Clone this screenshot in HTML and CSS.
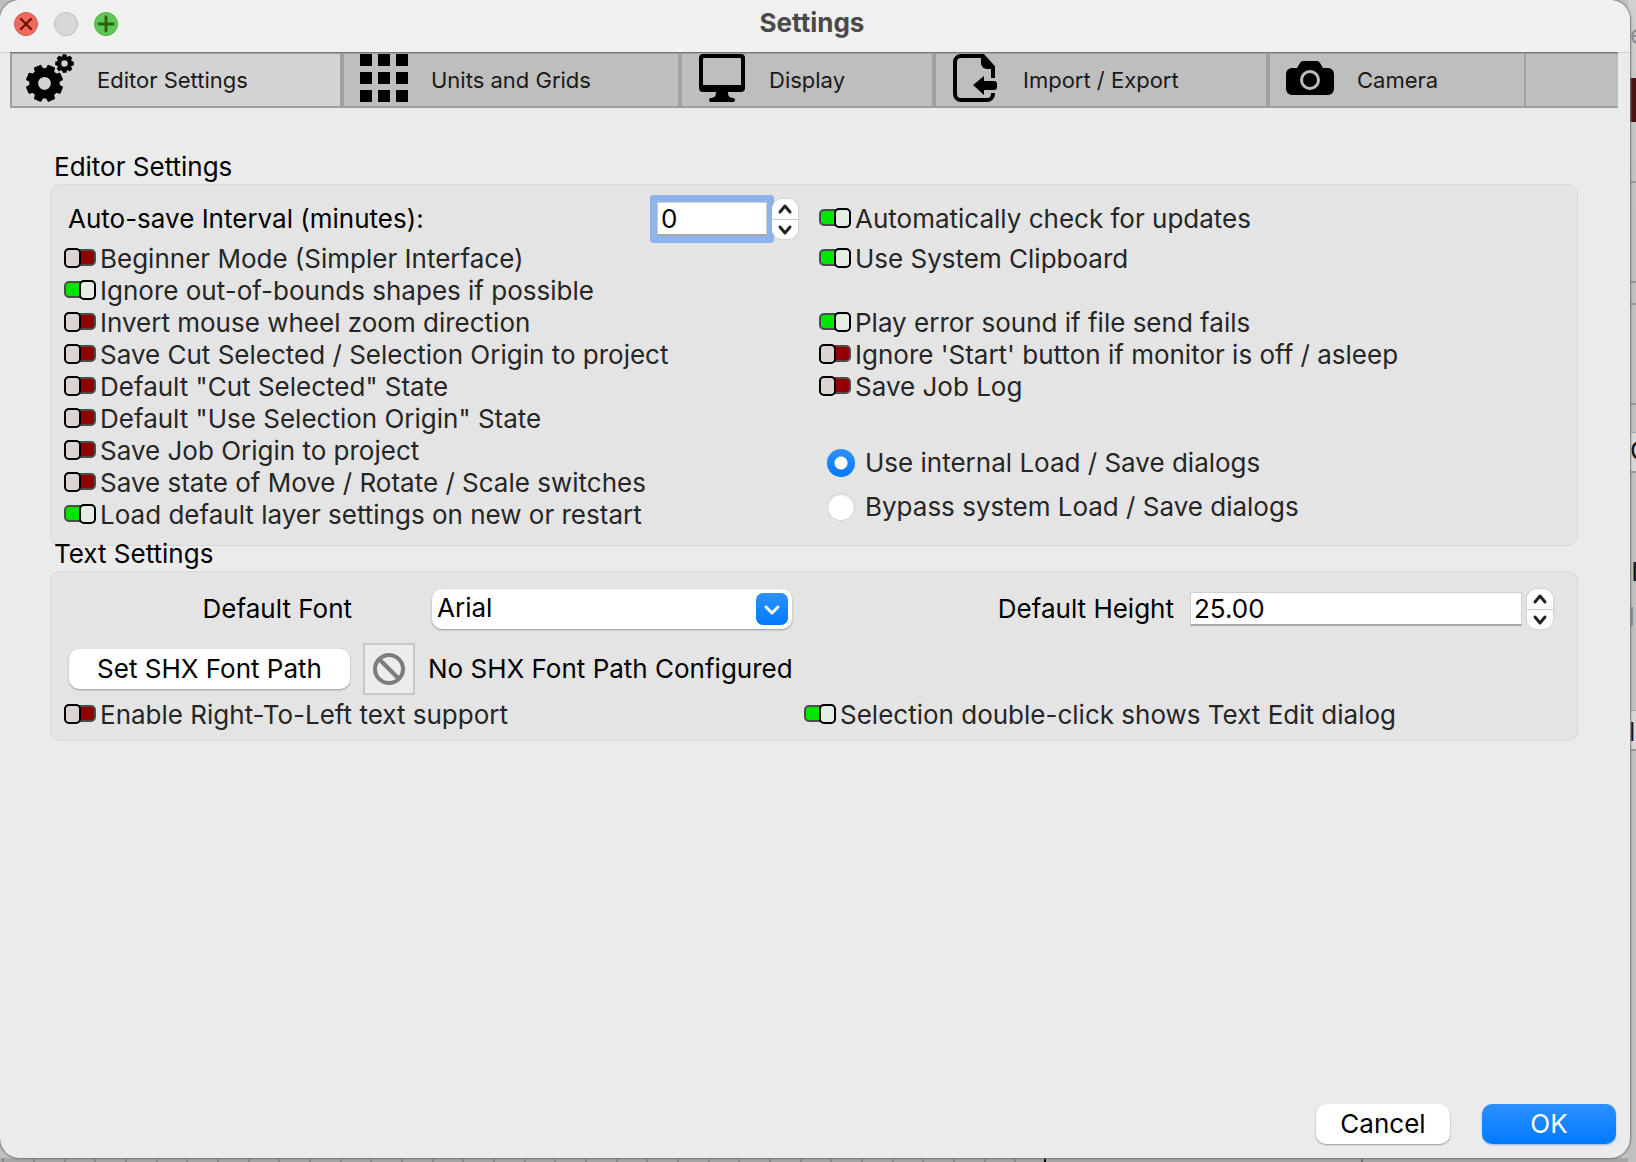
FILE: index.html
```html
<!DOCTYPE html>
<html lang="en">
<head>
<meta charset="utf-8">
<title>Settings</title>
<link rel="stylesheet" href="styles.css">
</head>
<body>
<div class="desktop">
  <div class="app-edge" aria-hidden="true">
    <span class="edge-text edge-muted edge-e">e</span>
    <span class="edge-swatch"></span>
    <span class="edge-line edge-line-a"></span>
    <span class="edge-line edge-line-b"></span>
    <span class="edge-line edge-line-c"></span>
    <span class="edge-line edge-line-d"></span>
    <span class="edge-box edge-box-a"></span>
    <span class="edge-text edge-g">G</span>
    <span class="edge-text edge-ol">ol</span>
    <span class="edge-text edge-muted edge-gg">g</span>
    <span class="edge-box edge-box-b"></span>
    <span class="edge-text edge-la">la</span>
  </div>
  <main class="window">
    <header class="titlebar">
      <div class="lights">
        <button class="light light-close" type="button" aria-label="Close"><svg viewBox="0 0 24 24"><path d="M7 7l10 10M17 7L7 17" stroke="#6d0f0a" stroke-width="2.4" stroke-linecap="round"/></svg></button>
        <button class="light light-min" type="button" aria-label="Minimize" disabled></button>
        <button class="light light-zoom" type="button" aria-label="Zoom"><svg viewBox="0 0 24 24"><path d="M12 5v14M5 12h14" stroke="#24600f" stroke-width="2.8" stroke-linecap="round"/></svg></button>
      </div>
      <h1 class="title">Settings</h1>
    </header>

    <nav class="tabs">
      <button class="tab tab-active" type="button">
        <svg class="tab-icon" viewBox="0 0 48 48">
          <defs>
            <g id="teeth">
              <path id="tooth" d="M-4.6 -13L-4 -17.800Q-3.800 -18.600 -3 -18.600H3Q3.800 -18.600 4 -17.800L4.600 -13z"/>
              <use href="#tooth" transform="rotate(45)"/><use href="#tooth" transform="rotate(90)"/><use href="#tooth" transform="rotate(135)"/><use href="#tooth" transform="rotate(180)"/><use href="#tooth" transform="rotate(225)"/><use href="#tooth" transform="rotate(270)"/><use href="#tooth" transform="rotate(315)"/>
              <circle r="10.8" fill="none" stroke="#000" stroke-width="8.8"/>
            </g>
          </defs>
          <use href="#teeth" transform="translate(18.5 29.3) rotate(22.5)"/>
          <use href="#teeth" transform="translate(38.5 9.5) scale(.5)"/>
        </svg>
        <span>Editor Settings</span>
      </button>
      <button class="tab" type="button">
        <svg class="tab-icon" viewBox="0 0 48 48"><path d="M0 0h12v12H0zM18 0h12v12H18zM36 0h12v12H36zM0 18h12v12H0zM18 18h12v12H18zM36 18h12v12H36zM0 36h12v12H0zM18 36h12v12H18zM36 36h12v12H36z"/></svg>
        <span>Units and Grids</span>
      </button>
      <button class="tab" type="button">
        <svg class="tab-icon" viewBox="0 0 48 48"><path fill-rule="evenodd" d="M5 0h38a4 4 0 0 1 4 4v30a4 4 0 0 1-4 4H30c0 4 1 5.500 5 6a2 2 0 0 1 0 4H13a2 2 0 0 1 0-4c4-.5 5-2 5-6H5a4 4 0 0 1-4-4V4a4 4 0 0 1 4-4zM6 4a1 1 0 0 0-1 1v26h38V5a1 1 0 0 0-1-1z"/></svg>
        <span>Display</span>
      </button>
      <button class="tab" type="button">
        <svg class="tab-icon" viewBox="0 0 48 48"><path d="M41 24V13L31 2H9a6 6 0 0 0-6 6v32a6 6 0 0 0 6 6h26a6 6 0 0 0 6-6v-1" fill="none" stroke="#000" stroke-width="4"/><path d="M29 1h3L42 12v3h-7a6 6 0 0 1-6-6z"/><path d="M21 31l11-9v5h10a3 3 0 0 1 3 3v3a3 3 0 0 1-3 3H32v5z"/></svg>
        <span>Import / Export</span>
      </button>
      <button class="tab" type="button">
        <svg class="tab-icon" viewBox="0 0 48 48"><path d="M6 14h5l3-5a4 4 0 0 1 3-2h14a4 4 0 0 1 3 2l3 5h5a6 6 0 0 1 6 6v15a6 6 0 0 1-6 6H6a6 6 0 0 1-6-6V20a6 6 0 0 1 6-6z"/><circle cx="24" cy="26" r="8.500" fill="none" stroke="#bebebe" stroke-width="3"/></svg>
        <span>Camera</span>
      </button>
      <span class="tab-fill"></span>
    </nav>

    <form class="content">
      <section class="section">
        <h2 class="section-title">Editor Settings</h2>
        <div class="group group-editor">
          <div class="column">
            <div class="row row-autosave">
              <label for="autosave">Auto-save Interval (minutes):</label>
              <div class="spin">
                <input class="field field-short field-focused" id="autosave" type="number" value="0">
                <div class="stepper">
                  <button type="button" aria-label="Increase interval"><svg viewBox="0 0 26 20"><path d="M8 13l5-6 5 6"/></svg></button>
                  <button type="button" aria-label="Decrease interval"><svg viewBox="0 0 26 20"><path d="M8 7l5 6 5-6"/></svg></button>
                </div>
              </div>
            </div>
            <label class="row check"><input class="switch" type="checkbox">Beginner Mode (Simpler Interface)</label>
            <label class="row check"><input class="switch" type="checkbox" checked>Ignore out-of-bounds shapes if possible</label>
            <label class="row check"><input class="switch" type="checkbox">Invert mouse wheel zoom direction</label>
            <label class="row check"><input class="switch" type="checkbox">Save Cut Selected / Selection Origin to project</label>
            <label class="row check"><input class="switch" type="checkbox">Default "Cut Selected" State</label>
            <label class="row check"><input class="switch" type="checkbox">Default "Use Selection Origin" State</label>
            <label class="row check"><input class="switch" type="checkbox">Save Job Origin to project</label>
            <label class="row check"><input class="switch" type="checkbox">Save state of Move / Rotate / Scale switches</label>
            <label class="row check"><input class="switch" type="checkbox" checked>Load default layer settings on new or restart</label>
          </div>
          <div class="column">
            <label class="row row-tall check"><input class="switch" type="checkbox" checked>Automatically check for updates</label>
            <label class="row check"><input class="switch" type="checkbox" checked>Use System Clipboard</label>
            <div class="checks-lower">
              <label class="row check"><input class="switch" type="checkbox" checked>Play error sound if file send fails</label>
              <label class="row check"><input class="switch" type="checkbox">Ignore 'Start' button if monitor is off / asleep</label>
              <label class="row check"><input class="switch" type="checkbox">Save Job Log</label>
            </div>
            <div class="radios">
              <label class="radio-row"><input class="radio" type="radio" name="dialogs" checked>Use internal Load / Save dialogs</label>
              <label class="radio-row"><input class="radio" type="radio" name="dialogs">Bypass system Load / Save dialogs</label>
            </div>
          </div>
        </div>
      </section>

      <section class="section">
        <h2 class="section-title section-title-tight">Text Settings</h2>
        <div class="group group-text">
          <div class="font-row">
            <label class="font-label" for="font">Default Font</label>
            <div class="combo">
              <select id="font"><option>Arial</option></select>
              <span class="combo-arrow"><svg viewBox="0 0 32 32"><path d="M10 14l6 6 6-6"/></svg></span>
            </div>
            <label class="height-label" for="height">Default Height</label>
            <div class="spin">
              <input class="field field-long" id="height" type="number" step="0.01" value="25.00">
              <div class="stepper">
                <button type="button" aria-label="Increase height"><svg viewBox="0 0 26 20"><path d="M8 13l5-6 5 6"/></svg></button>
                <button type="button" aria-label="Decrease height"><svg viewBox="0 0 26 20"><path d="M8 7l5 6 5-6"/></svg></button>
              </div>
            </div>
          </div>
          <div class="shx-row">
            <button class="button button-shx" type="button">Set SHX Font Path</button>
            <span class="status-icon"><svg viewBox="0 0 32 32"><circle cx="16" cy="16" r="14"/><path d="M6 6l20 20"/></svg></span>
            <span>No SHX Font Path Configured</span>
          </div>
          <div class="text-checks">
            <label class="row check"><input class="switch" type="checkbox">Enable Right-To-Left text support</label>
            <label class="row check"><input class="switch" type="checkbox" checked>Selection double-click shows Text Edit dialog</label>
          </div>
        </div>
      </section>

      <footer class="footer">
        <button class="button" type="button">Cancel</button>
        <button class="button button-primary" type="submit">OK</button>
      </footer>
    </form>
  </main>
</div>
</body>
</html>
```
FILE: styles.css
```css
*,
*::before,
*::after {
  box-sizing: border-box;
}

body {
  margin: 0;
  font-family: Inter, "Liberation Sans", sans-serif;
  font-size: 26px;
  line-height: 32px;
  color: #000;
}

button,
input,
select {
  margin: 0;
  padding: 0;
  border: 0;
  font: inherit;
  color: inherit;
}

button svg,
.combo-arrow svg,
.status-icon svg {
  display: block;
  fill: none;
}

.desktop {
  position: relative;
  display: flex;
  min-height: 100vh;
  padding: 0 6px 4px 0;
  background:
    linear-gradient(#000, #000) 1044px 100% / 2px 4px no-repeat,
    linear-gradient(#6e6e6e, #6e6e6e) 1361px 100% / 2px 4px no-repeat,
    repeating-linear-gradient(90deg, transparent 0 2px, #8a8a8a 2px 4px, transparent 4px 33px, #8a8a8a 33px 35px, transparent 35px 64px, #8a8a8a 64px 66px, transparent 66px 92px) 0 100% / 1044px 4px no-repeat,
    linear-gradient(#a6a6a6, #a6a6a6) 0 100% / 100% 4px no-repeat,
    #c0c0bf;
}

/* Sliver of the application visible beside the dialog */
.app-edge {
  position: absolute;
  inset: 0 0 0 auto;
  width: 8px;
  overflow: hidden;
  background: linear-gradient(#d0d0d0, #c0c0bf 20%);
}

.app-edge span {
  position: absolute;
}

.app-edge .edge-text { right: 0; width: 6px; white-space: nowrap; color: #111; overflow: hidden; }
.app-edge .edge-muted { color: #8e8e8e; }
.edge-e { top: 19px; }
.edge-g { top: 435px; }
.edge-ol { top: 556px; text-indent: -14px; }
.edge-gg { top: 597px; text-indent: -11px; }
.edge-la { top: 716px; text-indent: -1px; }
.edge-swatch { top: 78px; right: 0; width: 8px; height: 44px; background: #4a1010; }
.edge-line { right: 0; width: 8px; height: 2px; background: #999; }
.edge-line-a { top: 181px; }
.edge-line-b { top: 281px; }
.edge-line-c { top: 303px; }
.edge-line-d { top: 403px; }
.edge-box { right: 0; width: 8px; height: 41px; background: #d8d8d8; border-top: 1px solid #aaa; border-bottom: 2px solid #999; }
.edge-box-a { top: 432px; }
.edge-box-b { top: 710px; }

.window {
  position: relative;
  flex: 1;
  display: flex;
  flex-direction: column;
  background: #ebebeb;
  border-radius: 20px;
  overflow: hidden;
  box-shadow: 0 0 2px 1px #777;
}

.titlebar {
  position: relative;
  display: flex;
  align-items: center;
  justify-content: center;
  height: 52px;
  padding-bottom: 6px;
  background: #f0f0f0;
  box-shadow: 0 1px 0 #d0d0d0;
}

.title {
  margin: 0;
  padding-right: 6px;
  font-size: 26px;
  font-weight: 700;
  color: #4a4a4a;
}

.lights {
  position: absolute;
  left: 14px;
  top: 12px;
  display: flex;
  gap: 16px;
}

.light {
  width: 24px;
  height: 24px;
  border-radius: 50%;
  border: 1px solid #d5574b;
  background: #ee6a5f;
}

.light-min { background: #d8d8d8; border-color: #bcbcbc; }
.light-zoom { background: #62c655; border-color: #4cae3d; }
.light svg { margin: -1px; width: 24px; height: 24px; }

.tabs {
  position: relative;
  display: grid;
  grid-template-columns: 332fr 338fr 254fr 334fr 258fr 92fr;
  margin: 0 12px 0 10px;
  font-size: 22px;
  border-top: 1px solid #777;
}

.tab,
.tab-fill {
  height: 55px;
  background: #bebebe;
  border: 2px solid #a0a0a0;
  border-top-width: 1px;
}

.tab {
  display: flex;
  align-items: center;
  gap: 23px;
  padding-left: 14px;
  color: #1a1a1a;
  white-space: nowrap;
}

.tab + .tab { padding-left: 16px; }
.tab-active { background: #d3d3d3; }
.tab-fill { border-left: 0; border-right: 0; }

.tab .tab-icon {
  flex: none;
  align-self: flex-start;
  width: 48px;
  height: 48px;
  fill: #000;
}

.content {
  flex: 1;
  display: flex;
  flex-direction: column;
  padding: 43px 52px 14px 50px;
}

.section-title {
  margin: 0;
  padding-left: 4px;
  height: 33px;
  font-size: 26px;
  font-weight: 400;
}

.section-title-tight {
  height: 25px;
  line-height: 16px;
}

.group {
  background: #e4e4e4;
  border: 1px solid #dadada;
  border-radius: 10px;
}

.group-editor {
  display: grid;
  grid-template-columns: 755fr 758fr;
  padding: 10px 0 14px 13px;
}

.row {
  display: flex;
  align-items: center;
  height: 32px;
}

.check,
.radio-row {
  color: #262626;
  white-space: nowrap;
}

.check { gap: 4px; }
.row-tall { height: 48px; }

.row-autosave {
  height: 48px;
  justify-content: space-between;
  padding: 0 21px 0 4px;
}

.checks-lower { margin-top: 32px; }
.radios { margin: 38px 0 0 8px; }

.radio-row {
  display: flex;
  align-items: center;
  gap: 10px;
  height: 44px;
}

.switch {
  appearance: none;
  position: relative;
  flex: none;
  width: 32px;
  height: 20px;
  margin-bottom: 2px;
}

.switch::before,
.switch::after {
  content: "";
  position: absolute;
  border-radius: 5px;
}

.switch::before {
  inset: 1px 0 2px;
  background: #900000;
  border: 2px solid #4c4c4c;
}

.switch::after {
  top: 0;
  left: 0;
  width: 17px;
  height: 20px;
  background: #ddd3d3;
  border: 2px solid #000;
}

.switch:checked::before { background: #00e400; }
.switch:checked::after { left: 15px; background: #e4eee4; }

.radio {
  appearance: none;
  width: 28px;
  height: 28px;
  border-radius: 50%;
  background: #fff;
  box-shadow: inset 0 0 0 1px #d2d2d2, inset 0 2px 3px #ddd;
}

.radio:checked {
  background: radial-gradient(circle, #fff 0 6px, transparent 7px), linear-gradient(#2e90ff, #007aff);
  box-shadow: none;
}

.spin {
  display: flex;
  align-items: center;
  gap: 5px;
}

.field {
  appearance: textfield;
  height: 34px;
  padding: 0 3px;
  background: #fff;
  border: 1px solid #d0d0d0;
  border-bottom: 2px solid #a8a8a8;
  outline: 0;
}

.field::-webkit-inner-spin-button { appearance: none; margin: 0; }
.field-short { width: 110px; }
.field-long { width: 332px; }
.field-focused { border-radius: 1px; box-shadow: 0 0 0 7px #8cb3ec; }

.stepper {
  position: relative;
  width: 26px;
  height: 40px;
  border-radius: 10px;
  overflow: hidden;
  background: #fff;
  box-shadow: 0 0 2px #aaa;
}

.stepper button {
  display: block;
  width: 26px;
  height: 20px;
  background: #fff;
}

.stepper button + button { border-top: 1px solid #ccc; }

.stepper path {
  stroke: #222;
  stroke-width: 3;
  stroke-linecap: round;
  stroke-linejoin: round;
}

.group-text { padding: 17px 24px 9px 13px; }

.font-row {
  display: flex;
  align-items: center;
  height: 40px;
}

.font-label {
  width: 288px;
  text-align: right;
}

.combo {
  position: relative;
  width: 360px;
  margin-left: 80px;
}

.combo select {
  appearance: none;
  display: block;
  width: 100%;
  height: 40px;
  padding: 0 40px 2px 5px;
  border-radius: 10px;
  background: #fff;
  box-shadow: 0 1px 2px #999;
}

.combo-arrow {
  position: absolute;
  top: 4px;
  right: 4px;
  width: 32px;
  height: 32px;
  border-radius: 7px;
  background: linear-gradient(#2e90ff, #007aff);
  pointer-events: none;
}

.combo-arrow path {
  stroke: #fff;
  stroke-width: 3;
  stroke-linecap: round;
  stroke-linejoin: round;
}

.height-label { margin: 0 16px 0 auto; }

.shx-row {
  display: flex;
  align-items: center;
  gap: 13px;
  height: 52px;
  margin: 14px 0 4px 5px;
}

.status-icon {
  display: flex;
  align-items: center;
  justify-content: center;
  width: 52px;
  height: 52px;
  background: #ececec;
  border: 2px solid #c8c8c8;
}

.status-icon svg {
  width: 32px;
  height: 32px;
  stroke: #7c7c7c;
  stroke-width: 4;
}

.text-checks {
  display: grid;
  grid-template-columns: 740fr 749fr;
}

.footer {
  display: flex;
  justify-content: flex-end;
  gap: 32px;
  margin: auto -38px 0 0;
}

.button {
  width: 134px;
  height: 40px;
  border-radius: 10px;
  background: #fff;
  box-shadow: 0 1px 2px #999;
}

.button-shx { width: 281px; }

.button-primary {
  color: #fff;
  background: linear-gradient(#2e90ff, #007aff);
  box-shadow: 0 1px 2px #8ab8ee;
}
```
